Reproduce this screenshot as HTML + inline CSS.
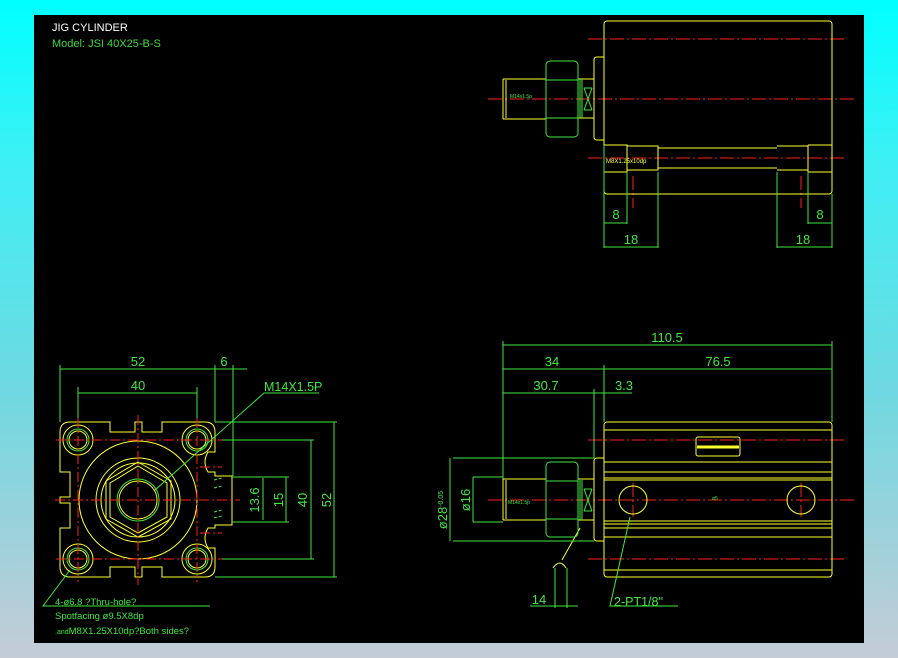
<!DOCTYPE html>
<html><head><meta charset="utf-8"><style>
html,body{margin:0;padding:0;}
body{width:898px;height:658px;background:linear-gradient(#00ffff 0%,#3ef0f4 25%,#70d8e0 60%,#c4ccd6 100%);position:relative;overflow:hidden;}
svg{position:absolute;left:0;top:0;}
text{font-family:"Liberation Sans",sans-serif;}
</style></head><body>
<svg width="898" height="658" viewBox="0 0 898 658" fill="none" stroke-width="1">
<rect x="34" y="15" width="830" height="628" fill="#000"/>
<text x="52" y="31" fill="#fff" font-size="11">JIG  CYLINDER</text>
<text x="52" y="47" fill="#3fd83f" font-size="11">Model:  JSI  40X25-B-S</text>

<!-- ===== TOP RIGHT VIEW ===== -->
<g stroke="#ff2020" stroke-dasharray="14,3,2,3">
<line x1="588" y1="39" x2="846" y2="39"/>
<line x1="488" y1="99" x2="856" y2="99"/>
<line x1="588" y1="158" x2="846" y2="158"/>
<line x1="633" y1="176" x2="633" y2="208"/>
<line x1="801" y1="176" x2="801" y2="208"/>
</g>
<g stroke="#ffff30">
<rect x="604" y="21" width="228" height="173" rx="3"/>
<path d="M604 57 H597 Q594 57 594 60 V137 Q594 140 597 140 H604"/>
<path d="M604 145 H627 V172 H604 M627 146 H658 V170 H627 M658 148 H777 M658 168 H777 M777 146 H808 V170 H777 M808 145 H832 M808 172 H832 M808 145 V172"/>
<path d="M578 79 H594 M578 118 H594"/>
<path d="M503 79 H546 M503 119 H546 M503 79 V119 M506 80 V118"/>
</g>
<g stroke="#3fe83f">
<rect x="546" y="61" width="32" height="76" rx="4"/>
<path d="M546 80 H578 M546 118 H578 M580 79 V118 M582 79 V118 M584 88 L592 110 M592 88 L584 110 M584 88 H592 M584 110 H592"/>
<path d="M604 145 V248 M627 172 V224 M658 172 V248 M777 172 V248 M808 172 V224 M832 194 V248"/>
<path d="M604 223 H627 M808 223 H832 M604 247 H658 M777 247 H832"/>
</g>
<text x="510" y="98" fill="#3fe83f" font-size="5">M14x1.5p</text>
<text x="606" y="163" fill="#ffff30" font-size="6">M8X1.25x10dp</text>
<g fill="#3fe83f" font-size="13" text-anchor="middle">
<text x="616" y="219">8</text><text x="820" y="219">8</text>
<text x="631" y="244">18</text><text x="803" y="244">18</text>
</g>

<!-- ===== BOTTOM LEFT FRONT VIEW ===== -->
<g stroke="#ffff30">
<path d="M70 422 H110 V432 H135 V422 H142 V432 H162 V422 H205 Q215 422 215 432 V452 H208 Q202 462 208 472 H215 V476 H232 V525 H215 V528 H208 Q202 538 208 548 H215 V567 Q215 577 205 577 H162 V567 H142 V577 H135 V567 H110 V577 H70 Q60 577 60 567 V528 H70 V503 H60 V497 H70 V472 H60 V432 Q60 422 70 422 Z"/>
<circle cx="138" cy="500" r="59"/>
<circle cx="138" cy="500" r="42"/>
<circle cx="138" cy="500" r="37"/>
<path d="M138 462 L171 481 V519 L138 537 L106 519 V481 Z"/>
<path d="M138 466 L167 483 V517 L138 533 L110 517 V483 Z"/>
<circle cx="138" cy="500" r="19"/>
<circle cx="78" cy="440" r="15"/><circle cx="197" cy="440" r="15"/>
<circle cx="78" cy="559" r="15"/><circle cx="197" cy="559" r="15"/>
<circle cx="78" cy="440" r="9"/><circle cx="197" cy="440" r="9"/>
<circle cx="78" cy="559" r="9"/><circle cx="197" cy="559" r="9"/>
</g>
<g stroke="#3fe83f">
<circle cx="138" cy="500" r="21"/>
<circle cx="78" cy="440" r="11"/><circle cx="197" cy="440" r="11"/>
<circle cx="78" cy="559" r="11"/><circle cx="197" cy="559" r="11"/>
<path d="M60 365 V422 M215 365 V422 M233 365 V476 M78 387 V428 M197 387 V428"/>
<path d="M60 369 H247 M78 393 H197"/>
<path d="M215 422 H337 M222 440 H314 M232 477 H289 M232 522 H289 M222 559 H314 M215 577 H337"/>
<path d="M334 422 V577 M311 440 V559 M286 477 V522 M263 478 V520"/>
<path d="M319 393 H264 L155 490"/>
<path d="M210 606 H43 L70 570"/>
<path d="M214 480 L222 478 M214 488 L222 486 M214 512 L222 510 M214 518 L222 516" stroke-dasharray="3,2"/>
</g>
<g stroke="#ff2020" stroke-dasharray="10,3,2,3">
<line x1="55" y1="500" x2="240" y2="500"/>
<line x1="138" y1="415" x2="138" y2="585"/>
<line x1="56" y1="440" x2="222" y2="440"/><line x1="56" y1="559" x2="222" y2="559"/>
<line x1="78" y1="418" x2="78" y2="582"/><line x1="197" y1="418" x2="197" y2="582"/>
<line x1="200" y1="467" x2="222" y2="467"/><line x1="200" y1="533" x2="222" y2="533"/>
</g>
<g fill="#3fe83f" font-size="13" text-anchor="middle">
<text x="138" y="366">52</text><text x="224" y="366">6</text><text x="138" y="390">40</text>
<text transform="translate(259 500) rotate(-90)">13.6</text>
<text transform="translate(283 500) rotate(-90)">15</text>
<text transform="translate(307 500) rotate(-90)">40</text>
<text transform="translate(331 500) rotate(-90)">52</text>
</g>
<text x="264" y="391" fill="#3fe83f" font-size="12.5">M14X1.5P</text>
<g fill="#3fe83f" font-size="9.5">
<text x="55" y="605">4-ø6.8 ?Thru-hole?</text>
<text x="55" y="619">Spotfacing  ø9.5X8dp</text>
<text x="55" y="634"><tspan font-size="7">.and</tspan>M8X1.25X10dp?Both  sides?</text>
</g>

<!-- ===== BOTTOM RIGHT SIDE VIEW ===== -->
<g stroke="#ff2020" stroke-dasharray="14,3,2,3">
<line x1="588" y1="440" x2="846" y2="440"/>
<line x1="488" y1="500" x2="856" y2="500"/>
<line x1="588" y1="559" x2="846" y2="559"/>
<line x1="633" y1="483" x2="633" y2="517"/>
<line x1="801" y1="483" x2="801" y2="517"/>
</g>
<g stroke="#ffff30">
<rect x="604" y="422" width="228" height="155" rx="3"/>
<path d="M604 430 H832 M604 462 H832 M604 472 H832 M604 478 H832 M604 480 H832 M604 521 H832 M604 524 H832 M604 528 H832 M604 537 H832 M604 570 H832"/>
<path d="M604 458 H597 Q594 458 594 461 V538 Q594 541 597 541 H604"/>
<circle cx="633" cy="500" r="14"/><circle cx="801" cy="500" r="14"/>
<path d="M503 479 H546 M503 520 H546 M503 479 V520 M506 480 V519 M578 479 H594 M578 520 H594"/>
<rect x="696" y="437" width="44" height="19" rx="2"/>
<path d="M697 447 H739" stroke-width="3"/>
<path d="M580 528 L562 560 M553 568 Q560 558 566 568"/>
</g>
<g stroke="#3fe83f">
<rect x="546" y="462" width="32" height="75" rx="4"/>
<path d="M546 481 H578 M546 519 H578 M580 480 V520 M582 480 V520 M584 489 L592 511 M592 489 L584 511 M584 489 H592 M584 511 H592"/>
<path d="M503 341 V479 M832 341 V422 M604 365 V422 M594 389 V458"/>
<path d="M503 345 H832 M503 369 H832 M503 393 H632"/>
<path d="M453 458 H594 M453 541 H594 M473 477 H503 M473 522 H503 M450 458 V541 M473 477 V522"/>
<path d="M555 568 V608 M567 568 V608 M530 606 H578"/>
<path d="M630 517 L610 606 H678"/>
</g>
<g fill="#3fe83f" font-size="13" text-anchor="middle">
<text x="667" y="342">110.5</text>
<text x="552" y="366">34</text><text x="718" y="366">76.5</text>
<text x="546" y="390">30.7</text><text x="624" y="390">3.3</text>
<text x="539" y="604">14</text>
<text transform="translate(470 500) rotate(-90)">ø16</text>
<text transform="translate(447 510) rotate(-90)">ø28<tspan font-size="7" dy="-4">-0.05</tspan></text>
</g>
<text x="614" y="606" fill="#3fe83f" font-size="12.5">2-PT1/8"</text>
<text x="508" y="504" fill="#3fe83f" font-size="5">M14x1.5p</text>
<text x="712" y="500" fill="#3fe83f" font-size="5">ø5</text>
</svg>
</body></html>
